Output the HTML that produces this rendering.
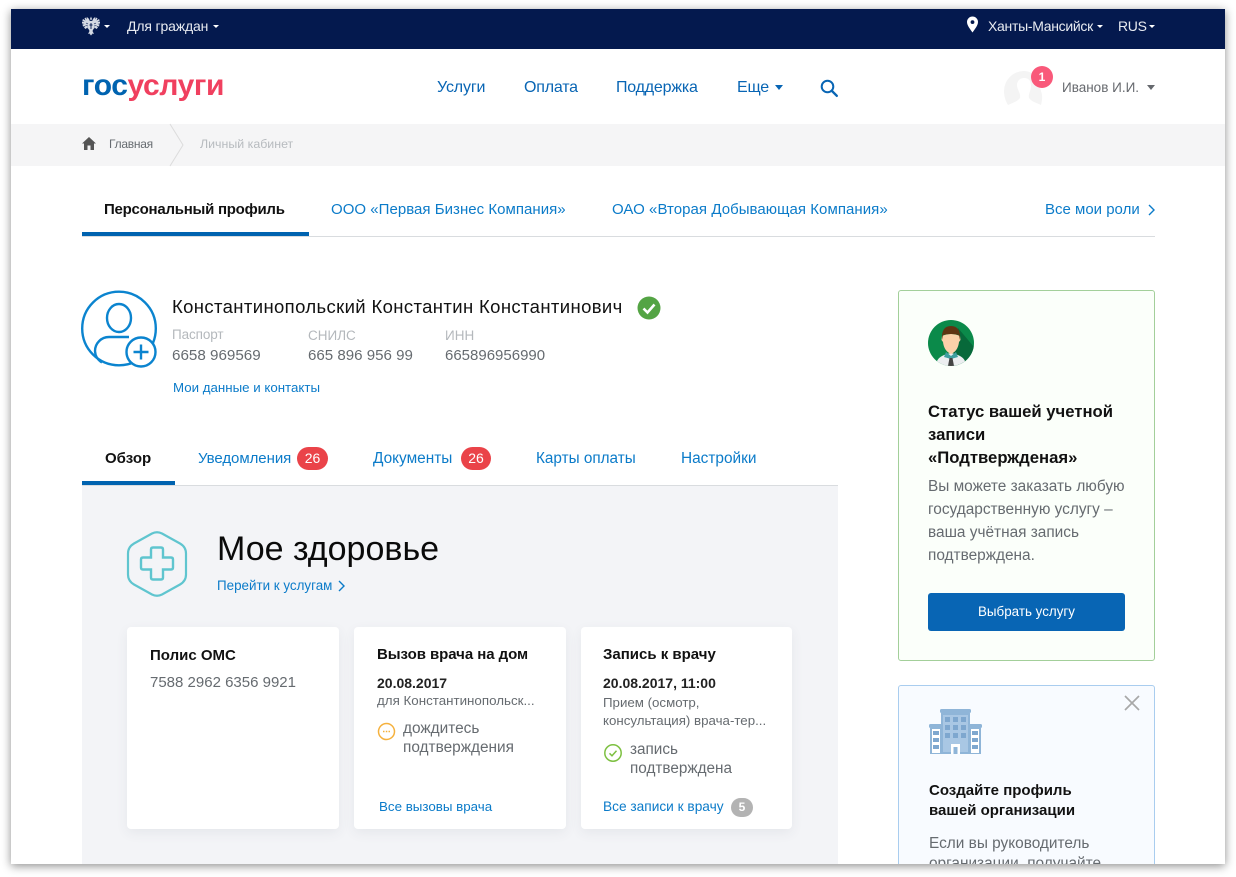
<!DOCTYPE html>
<html lang="ru"><head><meta charset="utf-8"><title>Госуслуги</title>
<style>
html,body{margin:0;padding:0;background:#fff;width:1236px;height:877px;overflow:hidden}
body{position:relative;font-family:"Liberation Sans",sans-serif}
#w{position:absolute;left:11px;top:9px;width:1214px;height:855px;background:#fff;box-shadow:0 2px 9px rgba(0,0,0,.45)}
#c{position:absolute;left:0;top:0;width:1236px;height:864px;overflow:hidden;clip-path:inset(9px 11px 0 11px)}
.t{position:absolute;white-space:nowrap;line-height:20px}
.b{position:absolute}
.l{color:#0b7bc9}
.g{color:#666b70}
.tri{position:absolute;width:0;height:0;border-left:3px solid transparent;border-right:3px solid transparent;border-top:3px solid #fff}
.card{position:absolute;top:627px;height:202px;background:#fff;border-radius:4px;box-shadow:0 4px 12px rgba(60,70,90,.07)}
svg{position:absolute;overflow:visible}
</style></head><body>
<div id="w"></div>
<div id="c">
<div class="b" style="left:11px;top:9px;width:1214px;height:40px;background:#04194e"></div>
<svg style="left:81px;top:15px" width="20" height="21" viewBox="0 0 20 21"><g fill="#d4d9e3"><path d="M10 1.500l1 2.500-1 1.500-1-1.500z"/><path d="M8.500 5C7.500 3 6.500 2 5.500 2.500l.5 2-1.500-2-1 1 1 2-2.500-1.500-.7 1.500 2.200 1.500-2.500-.5v2l2.500.5-2 .5.500 2 2.500-.5-1.500 1.500 1.500 1.500 2-1.500.5 1.500 1.500-1 .5-6z"/><path d="M11.500 5c1-2 2-3 3-2.500l-.5 2 1.500-2 1 1-1 2 2.500-1.500.7 1.500-2.200 1.500 2.500-.5v2l-2.500.5 2 .5-.5 2-2.500-.5 1.500 1.500-1.500 1.500-2-1.500-.5 1.500-1.500-1-.5-6z"/><path d="M8 6h4l.5 8-1 2 1.500 3-1.500-.5-1 2-.5-1.500-.5 1.500-1-2-1.500.5 1.500-3-1-2z"/></g><path d="M10 8v6M8.500 10h3" stroke="#04194e" stroke-width=".9"/><path d="M5 8l2 1M4.500 10.500l2.500.5M15 8l-2 1M15.500 10.500l-2.500.5" stroke="#04194e" stroke-width=".6"/></svg>
<div class="tri" style="left:104px;top:25px"></div>
<div class="t" style="left:127px;top:16px;font-size:14px;color:#e8ebf1;letter-spacing:-.15px">Для граждан</div>
<div class="tri" style="left:213px;top:25px"></div>
<svg style="left:966px;top:16px" width="13" height="17" viewBox="0 0 13 17"><path fill="#fff" fill-rule="evenodd" d="M6.500 0.500a5.500 5.500 0 0 1 5.500 5.500c0 3.500-3.500 7.500-5.500 10.500C4.500 13.500 1 9.500 1 6a5.500 5.500 0 0 1 5.500-5.500zM6.500 4.200a1.900 1.900 0 1 0 0 3.800 1.900 1.900 0 0 0 0-3.800z"/></svg>
<div class="t" style="left:988px;top:16px;font-size:14px;color:#e8ebf1;letter-spacing:-.3px">Ханты-Мансийск</div>
<div class="tri" style="left:1097px;top:25px"></div>
<div class="t" style="left:1118px;top:16px;font-size:14px;color:#e8ebf1;letter-spacing:-.3px">RUS</div>
<div class="tri" style="left:1149px;top:25px"></div>

<div class="t" style="left:82px;top:68px;font-size:30px;line-height:36px;font-weight:bold;letter-spacing:-.4px;color:#f0405f"><span style="color:#0063b0">гос</span>услуги</div>
<div class="t l" style="left:437px;top:78px;font-size:16px;color:#0865b4;letter-spacing:-.15px">Услуги</div>
<div class="t l" style="left:524px;top:78px;font-size:16px;color:#0865b4;letter-spacing:-.2px">Оплата</div>
<div class="t l" style="left:616px;top:78px;font-size:16px;color:#0865b4;letter-spacing:-.2px">Поддержка</div>
<div class="t l" style="left:737px;top:78px;font-size:16px;color:#0865b4;letter-spacing:-.2px">Еще</div>
<div class="tri" style="left:775px;top:85px;border-left-width:4px;border-right-width:4px;border-top:5px solid #0865b4"></div>
<svg style="left:820px;top:79px" width="18" height="18" viewBox="0 0 18 18"><circle cx="7.500" cy="7.500" r="5.800" fill="none" stroke="#0865b4" stroke-width="2"/><path d="M11.800 11.800l5 5" stroke="#0865b4" stroke-width="2.400" stroke-linecap="round"/></svg>

<svg style="left:1003px;top:70px" width="44" height="38" viewBox="0 0 44 38"><path fill="#f4f4f4" d="M21 1a20 20 0 0 0-20 20c0 5 1.500 10 4 14 4-2 9-3 12-7 1-5-3-8-3-13 0-4 3-7 7-7 5 0 7 3 7 8 0 5-3 8-2 12 3 4 8 5 12 7 1-4 2-9 0-14C35 8 30 1 21 1z"/></svg>
<div class="b" style="left:1031px;top:66px;width:22px;height:22px;border-radius:50%;background:#f9597a;color:#fff;font-size:12px;font-weight:bold;text-align:center;line-height:22px">1</div>
<div class="t" style="left:1062px;top:78px;font-size:13.500px;color:#66696e">Иванов И.И.</div>
<div class="tri" style="left:1147px;top:85px;border-left-width:4px;border-right-width:4px;border-top:5px solid #66696e"></div>

<div class="b" style="left:11px;top:124px;width:1214px;height:42px;background:#f5f5f6"></div>
<svg style="left:170px;top:124px" width="14" height="42" viewBox="0 0 14 42"><path d="M0 0l13 21L0 42" fill="none" stroke="#dcdcdc"/></svg>
<svg style="left:82px;top:137px" width="14" height="13" viewBox="0 0 14 13"><path fill="#555" d="M7 0l7 6.500h-2V13H8.500V8.500h-3V13H2V6.500H0z"/></svg>
<div class="t" style="left:109px;top:134px;font-size:12px;color:#666b70;letter-spacing:-.25px">Главная</div>
<div class="t" style="left:200px;top:134px;font-size:12.400px;color:#b7bbbf">Личный кабинет</div>

<div class="t" style="left:104px;top:200px;font-size:15px;font-weight:bold;color:#111;letter-spacing:-.25px">Персональный профиль</div>
<div class="t l" style="left:331px;top:200px;font-size:15px;letter-spacing:.03px">ООО «Первая Бизнес Компания»</div>
<div class="t l" style="left:612px;top:200px;font-size:15px;letter-spacing:.05px">ОАО «Вторая Добывающая Компания»</div>
<div class="t l" style="left:1045px;top:200px;font-size:15px">Все мои роли</div>
<svg style="left:1148px;top:204px" width="8" height="12" viewBox="0 0 8 12"><path d="M1 1l5 5-5 5" fill="none" stroke="#0b7bc9" stroke-width="1.400"/></svg>
<div class="b" style="left:82px;top:236px;width:1073px;height:1px;background:#d9dcdf"></div>
<div class="b" style="left:82px;top:232px;width:227px;height:4px;background:#0063b0"></div>

<svg style="left:81px;top:290px" width="76" height="78" viewBox="0 0 76 78"><g fill="none" stroke="#0b84cf" stroke-width="2.400"><circle cx="38" cy="38.500" r="36.800"/><path d="M48 47H28a14 14 0 0 0-14 14 14 14 0 0 0 7 11.500"/><ellipse cx="38" cy="28" rx="12" ry="14"/><circle cx="60" cy="62" r="14.500" stroke-width="2.400" fill="#fff"/><path d="M60 54.500v15M52.500 62h15" stroke-width="2.400"/></g></svg>
<div class="t" style="left:172px;top:297px;font-size:18.500px;color:#111;letter-spacing:.37px">Константинопольский Константин Константинович</div>
<svg style="left:637px;top:296px" width="24" height="24" viewBox="0 0 24 24"><circle cx="12" cy="12" r="11.500" fill="#54a444"/><path d="M6.500 12.500l4 4 7-8" fill="none" stroke="#fff" stroke-width="2.600"/></svg>
<div class="t" style="left:172px;top:325px;font-size:13.500px;color:#b4b8bc;letter-spacing:-.1px">Паспорт</div>
<div class="t" style="left:308px;top:326px;font-size:13.500px;color:#b4b8bc">СНИЛС</div>
<div class="t" style="left:445px;top:326px;font-size:13.500px;color:#b4b8bc">ИНН</div>
<div class="t g" style="left:172px;top:346px;font-size:15.200px">6658 969569</div>
<div class="t g" style="left:308px;top:346px;font-size:15.100px">665 896 956 99</div>
<div class="t g" style="left:445px;top:346px;font-size:15px">665896956990</div>
<div class="t l" style="left:173px;top:378px;font-size:13.300px">Мои данные и контакты</div>

<div class="t" style="left:105px;top:449px;font-size:15px;font-weight:bold;color:#111">Обзор</div>
<div class="t l" style="left:198px;top:449px;font-size:15px;letter-spacing:-.05px">Уведомления</div>
<div class="b" style="left:297px;top:447px;width:31px;height:23px;border-radius:12px;background:#ea4349;color:#fff;font-size:14px;text-align:center;line-height:23px">26</div>
<div class="t l" style="left:373px;top:449px;font-size:15.400px">Документы</div>
<div class="b" style="left:461px;top:447px;width:30px;height:23px;border-radius:12px;background:#ea4349;color:#fff;font-size:14px;text-align:center;line-height:23px">26</div>
<div class="t l" style="left:536px;top:449px;font-size:15.300px">Карты оплаты</div>
<div class="t l" style="left:681px;top:449px;font-size:15.400px">Настройки</div>
<div class="b" style="left:82px;top:485px;width:756px;height:380px;background:#f3f4f7"></div>
<div class="b" style="left:82px;top:485px;width:756px;height:1px;background:#d9dcdf"></div>
<div class="b" style="left:82px;top:481px;width:93px;height:4px;background:#0063b0"></div>

<svg style="left:127px;top:531px" width="60" height="66" viewBox="0 0 60 66"><path d="M25 2.500q5-2.500 10 0l18 10q6 3.500 6 10v21q0 6.500-6 10l-18 10q-5 2.500-10 0l-18-10q-6-3.500-6-10v-21q0-6.500 6-10z" fill="none" stroke="#5fc5cf" stroke-width="2.200"/><path d="M24 18.500q0-2 2-2h8q2 0 2 2v8h8q2 0 2 2v8q0 2-2 2h-8v8q0 2-2 2h-8q-2 0-2-2v-8h-8q-2 0-2-2v-8q0-2 2-2h8z" fill="none" stroke="#5fc5cf" stroke-width="2.400"/></svg>
<div class="t" style="left:217px;top:528px;font-size:34px;line-height:42px;color:#0a0a0a">Мое здоровье</div>
<div class="t l" style="left:217px;top:576px;font-size:13.400px">Перейти к услугам</div>
<svg style="left:338px;top:580px" width="8" height="12" viewBox="0 0 8 12"><path d="M1 1l5 5-5 5" fill="none" stroke="#0b7bc9" stroke-width="1.400"/></svg>

<div class="card" style="left:127px;width:212px"></div>
<div class="card" style="left:354px;width:212px"></div>
<div class="card" style="left:581px;width:211px"></div>
<div class="t" style="left:150px;top:646px;font-size:15px;font-weight:bold;color:#111">Полис ОМС</div>
<div class="t g" style="left:150px;top:673px;font-size:15px">7588 2962 6356 9921</div>

<div class="t" style="left:377px;top:645px;font-size:15px;font-weight:bold;color:#111;letter-spacing:-.05px">Вызов врача на дом</div>
<div class="t" style="left:377px;top:673px;font-size:14px;font-weight:bold;color:#222">20.08.2017</div>
<div class="t g" style="left:377px;top:691px;font-size:13.350px">для Константинопольск...</div>
<svg style="left:377px;top:722px" width="19" height="19" viewBox="0 0 19 19"><circle cx="9.500" cy="9.500" r="8" fill="none" stroke="#f5b13d" stroke-width="1.500"/><path d="M6 9.500h1.500M8.800 9.500h1.500M11.500 9.500H13" stroke="#f5b13d" stroke-width="1.500"/></svg>
<div class="t g" style="left:403px;top:719px;font-size:15.400px">дождитесь</div>
<div class="t g" style="left:403px;top:738px;font-size:15.400px">подтверждения</div>
<div class="t l" style="left:379px;top:797px;font-size:13.350px">Все вызовы врача</div>

<div class="t" style="left:603px;top:645px;font-size:15px;font-weight:bold;color:#111">Запись к врачу</div>
<div class="t" style="left:603px;top:673px;font-size:14px;font-weight:bold;color:#222">20.08.2017, 11:00</div>
<div class="t g" style="left:603px;top:693px;font-size:13.300px">Прием (осмотр,</div>
<div class="t g" style="left:603px;top:711px;font-size:13.300px">консультация) врача-тер...</div>
<svg style="left:603px;top:743px" width="20" height="20" viewBox="0 0 20 20"><circle cx="10" cy="10" r="8.200" fill="none" stroke="#7dc041" stroke-width="1.500"/><path d="M6.500 10.300l2.500 2.500 4.500-5" fill="none" stroke="#7dc041" stroke-width="1.500"/></svg>
<div class="t g" style="left:630px;top:740px;font-size:15.300px">запись</div>
<div class="t g" style="left:630px;top:759px;font-size:15.300px">подтверждена</div>
<div class="t l" style="left:603px;top:797px;font-size:13.700px">Все записи к врачу</div>
<div class="b" style="left:731px;top:798px;width:22px;height:19px;border-radius:10px;background:#b3b3b3;color:#fff;font-size:12px;font-weight:bold;text-align:center;line-height:19px">5</div>

<div class="b" style="left:898px;top:290px;width:255px;height:369px;background:#fbfffa;border:1px solid #a3cf9a;border-radius:3px"></div>
<svg style="left:928px;top:320px" width="46" height="46" viewBox="0 0 46 46"><defs><clipPath id="k"><circle cx="23" cy="23" r="23"/></clipPath></defs><g clip-path="url(#k)"><rect width="46" height="46" fill="#0b8a4a"/><path d="M30 8l16 19v19H22z" fill="#07693a"/><path d="M8 46c0-8 6-11 15-13 9 2 15 5 15 13z" fill="#eceef0"/><path d="M18 32l5 4 5-4 2 5-7 2-7-2z" fill="#3f9fa0"/><path d="M21.500 38h3l1.500 8h-6z" fill="#444"/><path d="M14 16q9-4 18 0l.5 4-1.500 2q-1 9-8 12-7-3-8-12l-1.500-2z" fill="#fbd0a9"/><path d="M14 20q-1-14 9-14t9 14l-1-5q-8-2-16 0z" fill="#5f3413"/></g></svg>
<div class="t" style="left:928px;top:400px;font-size:16.700px;font-weight:bold;line-height:23px;color:#111;width:210px">Статус вашей учетной<br>записи<br>«Подтвержденая»</div>
<div class="t g" style="left:928px;top:475px;font-size:15.400px;line-height:23px">Вы можете заказать любую<br>государственную услугу –<br>ваша учётная запись<br>подтверждена.</div>
<div class="b" style="left:928px;top:593px;width:197px;height:38px;border-radius:3px;background:#0865b4;color:#fff;font-size:13.400px;text-align:center;line-height:37px">Выбрать услугу</div>

<div class="b" style="left:898px;top:685px;width:255px;height:200px;background:#f8fbff;border:1px solid #a9cdef;border-radius:3px"></div>
<svg style="left:1124px;top:695px" width="16" height="16" viewBox="0 0 16 16"><path d="M1 1l14 14M15 1L1 15" stroke="#a8a8a8" stroke-width="1.700"/></svg>
<svg style="left:929px;top:709px" width="53" height="46" viewBox="0 0 53 46"><g fill="#8fb5d8"><rect x="11" y="0" width="31" height="4" rx="1.500"/><rect x="0" y="15" width="53" height="4" rx="1.500"/><path d="M1 19h11V4h29v15h11v26H1z"/></g><g fill="#fff"><rect x="14" y="6" width="25" height="37" fill="#a9c7e4"/><rect x="22" y="35" width="9" height="10"/><rect x="3" y="20" width="8" height="24" /><rect x="42" y="20" width="8" height="24"/></g><g fill="#7ea7cf"><rect x="4" y="22" width="6" height="4"/><rect x="4" y="29" width="6" height="4"/><rect x="4" y="36" width="6" height="4"/><rect x="43" y="22" width="6" height="4"/><rect x="43" y="29" width="6" height="4"/><rect x="43" y="36" width="6" height="4"/><rect x="16" y="8" width="5" height="5"/><rect x="24" y="8" width="5" height="5"/><rect x="32" y="8" width="5" height="5"/><rect x="16" y="16" width="5" height="5"/><rect x="24" y="16" width="5" height="5"/><rect x="32" y="16" width="5" height="5"/><rect x="16" y="24" width="5" height="5"/><rect x="24" y="24" width="5" height="5"/><rect x="32" y="24" width="5" height="5"/></g><rect x="24.500" y="38" width="4" height="7" fill="#8fb5d8"/></svg>
<div class="t" style="left:929px;top:781px;font-size:15px;font-weight:bold;line-height:20px;color:#111">Создайте профиль<br>вашей организации</div>
<div class="t g" style="left:929px;top:834px;font-size:15.400px;line-height:20px">Если вы руководитель<br>организации, получайте</div>
</div>
</body></html>
